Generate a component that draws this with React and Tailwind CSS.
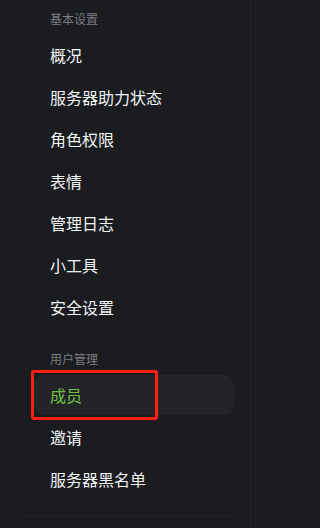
import React from 'react';

const sections = [
  {
    title: '基本设置',
    items: ['概况', '服务器助力状态', '角色权限', '表情', '管理日志', '小工具', '安全设置'],
  },
  {
    title: '用户管理',
    items: ['成员', '邀请', '服务器黑名单'],
  },
];

function NavItem({ label, active }) {
  return (
    <div
      className={
        'relative h-10 px-4 flex items-center rounded-[10px] text-base ' +
        (active ? 'bg-[#232428] text-[#6cc23f]' : 'text-[#f2f3f5]')
      }
    >
      {label}
      {active && (
        <div className="absolute left-[-3px] top-[-5px] w-[127px] h-[50px] border-[3px] border-[#ff2015] rounded-[3px]" />
      )}
    </div>
  );
}

export default function App() {
  return (
    <div
      className="w-full min-w-[276px] h-screen min-h-[528px] bg-[#1b1c1f] flex overflow-hidden"
      style={{ fontFamily: '"Noto Sans CJK SC", "Noto Sans", sans-serif' }}
    >
      <div className="w-[251px] shrink-0 border-r border-[#232427] pt-[11px] pl-[34px] pr-4 flex flex-col">
        {sections.map((s, i) => (
          <div key={s.title} className={i > 0 ? 'mt-6' : ''}>
            <div className="pl-4 h-4 leading-4 text-xs text-[#7b7d82] mb-2">{s.title}</div>
            <div className="flex flex-col gap-[2px]">
              {s.items.map((it) => (
                <NavItem key={it} label={it} active={it === '成员'} />
              ))}
            </div>
          </div>
        ))}
        <div className="mt-4 ml-[-8px] border-t border-[#25262a]" />
      </div>
      <div className="flex-1" />
    </div>
  );
}
